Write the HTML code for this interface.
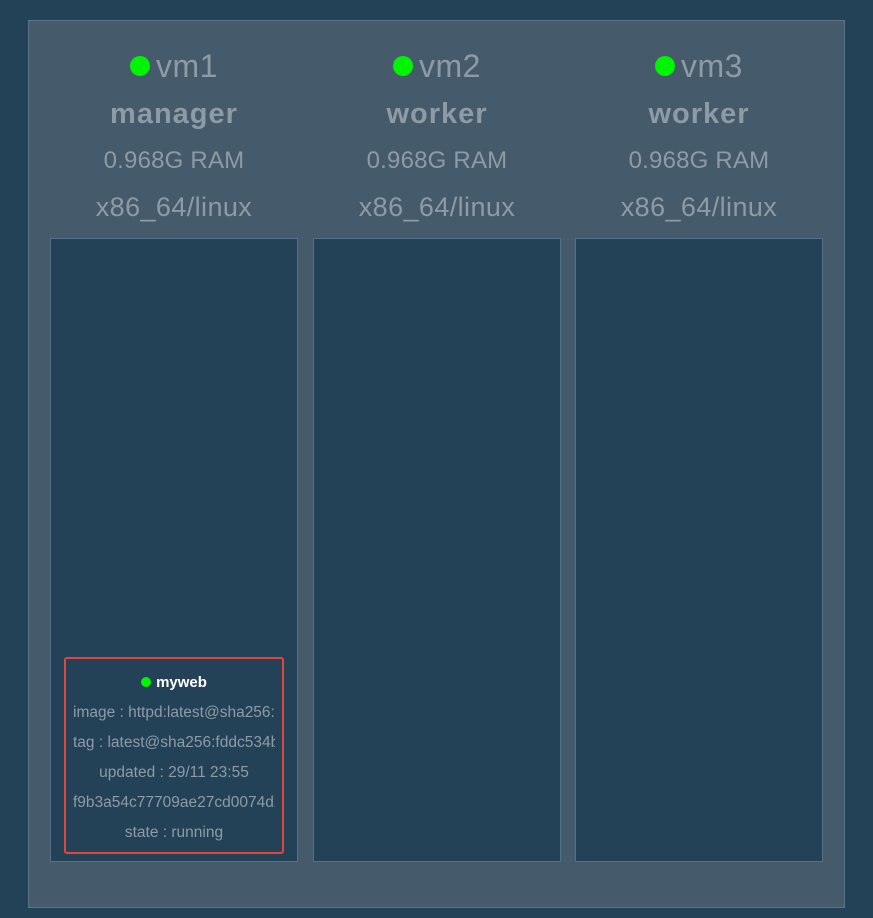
<!DOCTYPE html>
<html><head><style>
body{margin:0;width:873px;height:918px;background:#244257;font-family:"Liberation Sans",sans-serif;overflow:hidden;position:relative}
.outer{position:absolute;left:28px;top:20px;width:815px;height:886px;background:#455a6b;border:1px solid #5a7388}
.col{position:absolute;top:0;width:250px;text-align:center;color:#8d9ba6}
.h{position:absolute;left:0;width:100%;white-space:nowrap}
.vm{top:26px;font-size:32px;line-height:40px;letter-spacing:0.5px}
.dot{display:inline-block;width:20px;height:20px;border-radius:50%;background:#00f300;vertical-align:1px;margin-right:6px}
.role{top:75px;font-size:29px;font-weight:bold;line-height:38px;letter-spacing:1px}
.ram{top:124px;font-size:24px;line-height:34px;letter-spacing:0.2px}
.arch{top:169px;font-size:27px;line-height:36px;letter-spacing:0.4px}
.box{position:absolute;top:217px;left:21px;width:246px;height:622px;background:#244257;border:1px solid #557088}
.card{position:absolute;left:64px;top:657px;width:220px;height:197px;border:2px solid #e0463c;border-radius:3px;background:#244257;overflow:hidden;padding:0 7px;box-sizing:border-box;text-align:center;color:#8d9ba6;font-size:15.5px}
.card div{white-space:nowrap;line-height:30px;overflow:hidden}
.card .n{color:#fff;font-weight:bold;margin-top:9px;line-height:30px;font-size:15px}
.sd{display:inline-block;width:10px;height:10px;border-radius:50%;background:#00f300;margin-right:5px}
</style></head><body>
<div class="outer">
 <div class="col" style="left:21px"><div class="box" style="left:0"></div></div>
 <div class="col" style="left:284px"><div class="box" style="left:0"></div></div>
 <div class="col" style="left:546px"><div class="box" style="left:0"></div></div>
</div>
<div class="col" style="left:49px;top:20px"><div class="h vm"><span class="dot"></span>vm1</div><div class="h role">manager</div><div class="h ram">0.968G RAM</div><div class="h arch">x86_64/linux</div></div>
<div class="col" style="left:312px;top:20px"><div class="h vm"><span class="dot"></span>vm2</div><div class="h role">worker</div><div class="h ram">0.968G RAM</div><div class="h arch">x86_64/linux</div></div>
<div class="col" style="left:574px;top:20px"><div class="h vm"><span class="dot"></span>vm3</div><div class="h role">worker</div><div class="h ram">0.968G RAM</div><div class="h arch">x86_64/linux</div></div>
<div class="card">
<div class="n"><span class="sd"></span>myweb</div>
<div style="text-align:left">image : httpd:latest@sha256:fddc534b7f6bb</div>
<div style="text-align:left">tag : latest@sha256:fddc534b7f6bb6</div>
<div>updated : 29/11 23:55</div>
<div style="text-align:left">f9b3a54c77709ae27cd0074d2211</div>
<div>state : running</div>
</div>
</body></html>
